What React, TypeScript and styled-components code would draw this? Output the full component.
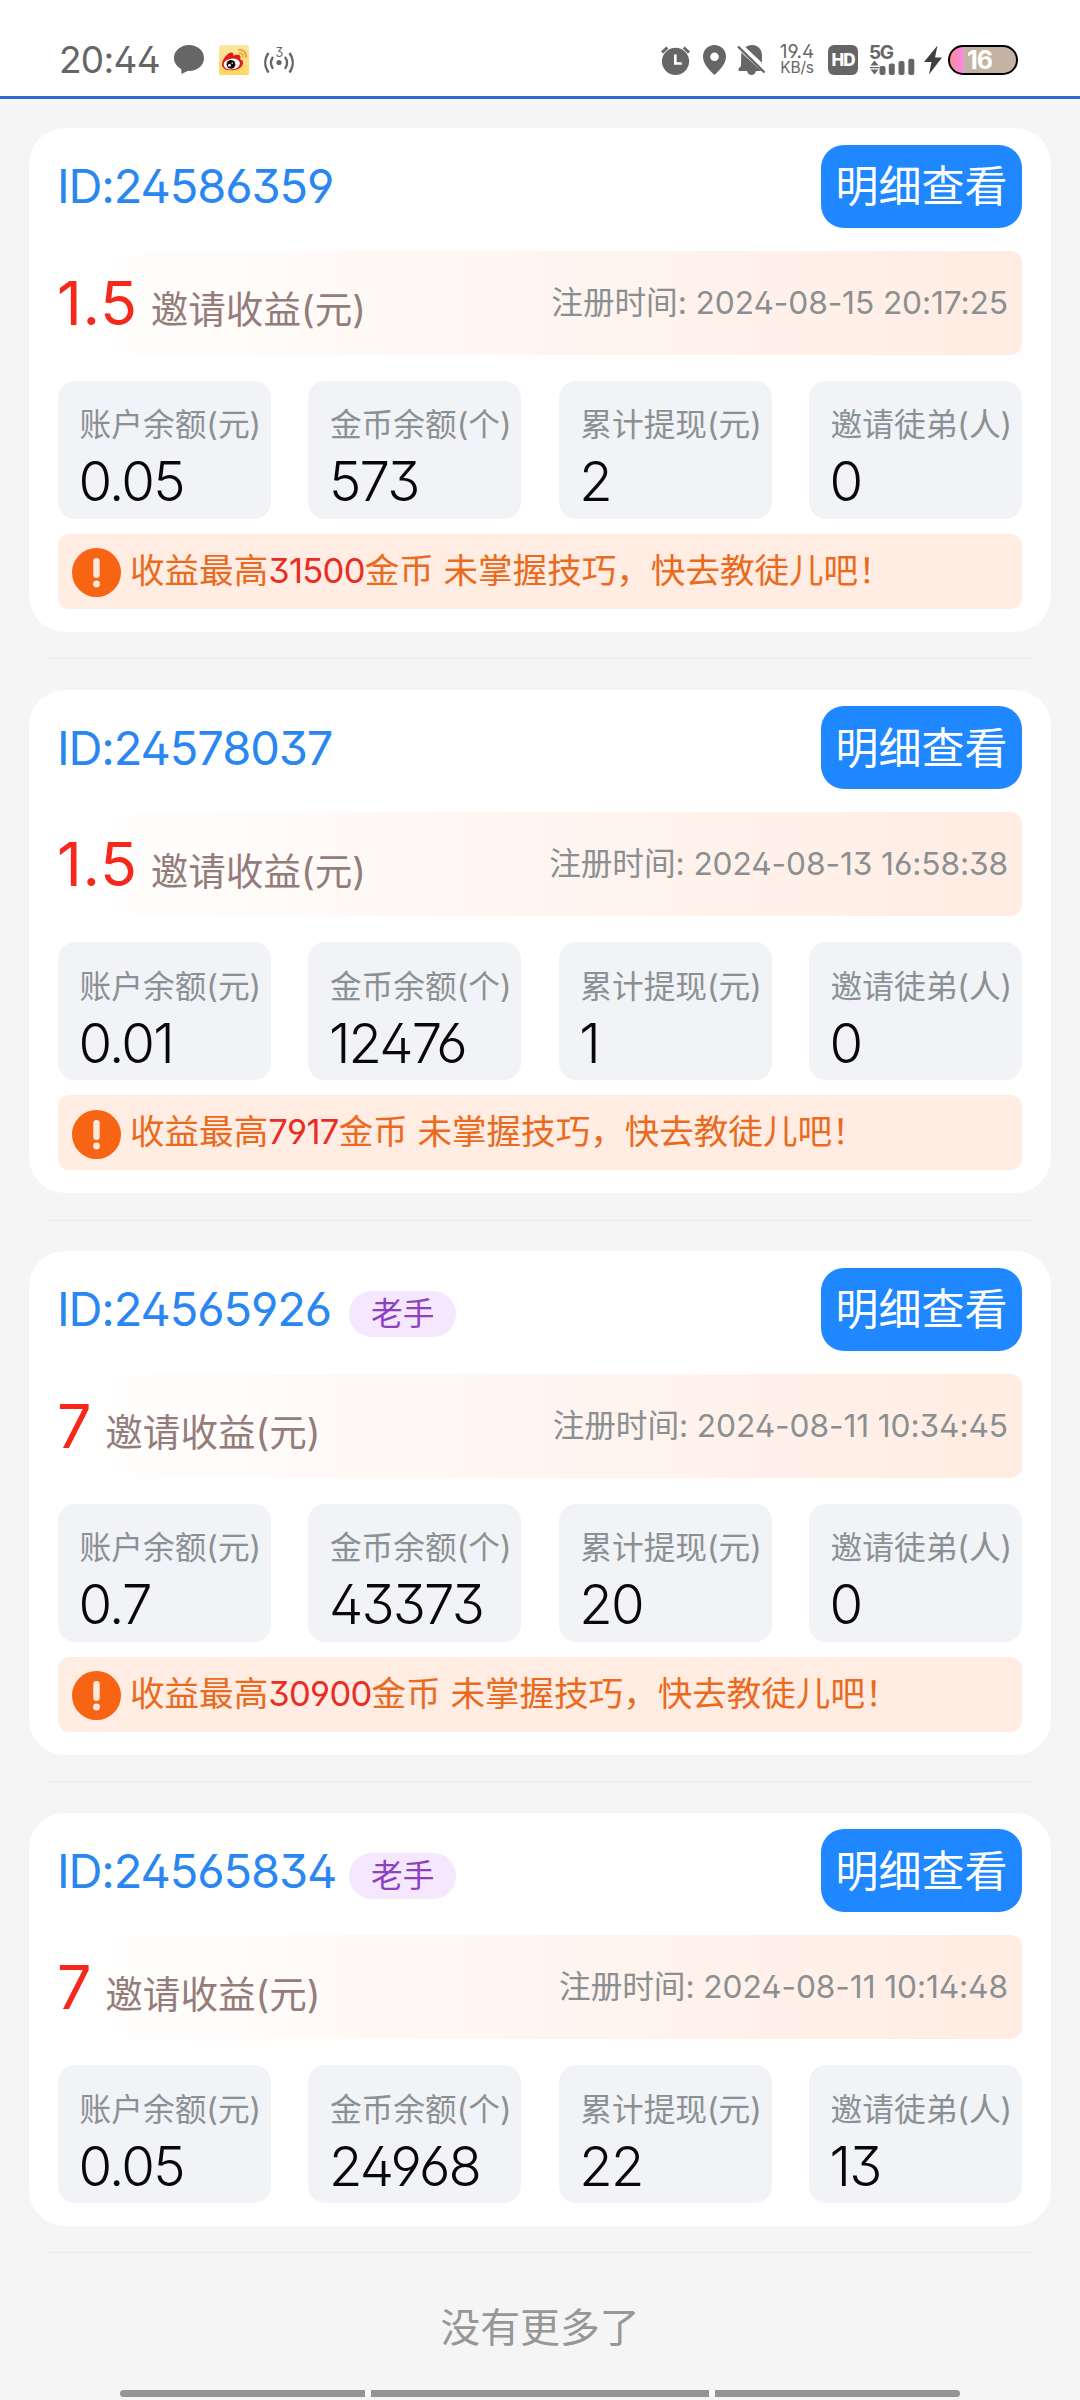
import React from 'react';
import styled, { createGlobalStyle } from 'styled-components';

const GlobalStyle = createGlobalStyle`
  body {
    margin: 0;
    background: #f5f5f5;
    font-family: Inter, 'Noto Sans CJK SC', sans-serif;
    font-feature-settings: 'ss01';
    font-weight: 400;
    -webkit-font-smoothing: antialiased;
  }
`;

const Page = styled.div`
  width: 1080px;
  height: 2400px;
  display: flex;
  flex-direction: column;
  box-sizing: border-box;
  background: #f5f5f5;
  overflow: hidden;
`;

/* ---------- status bar ---------- */

const StatusBar = styled.header`
  flex: none;
  height: 99px;
  box-sizing: border-box;
  padding: 24px 62px 0 59px;
  border-bottom: 3px solid #2a6bd6;
  background: #fff;
  color: #666;
  display: flex;
  align-items: center;
  justify-content: space-between;
`;

const StatusSide = styled.div`
  display: flex;
  align-items: center;
  height: 30px;
`;

const Clock = styled.span`
  width: 115px;
  font-size: 37px;
  line-height: 30px;
  letter-spacing: -0.7px;
  white-space: nowrap;
`;

const Glyph = styled.svg<{ $gap?: number }>`
  display: block;
  flex: none;
  margin-left: ${p => p.$gap ?? 0}px;
`;

const NetSpeed = styled.div`
  width: 36px;
  margin-left: 13px;
  display: flex;
  flex-direction: column;
  align-items: center;
  white-space: nowrap;
`;

const SpeedValue = styled.span`
  font-size: 19px;
  line-height: 16px;
`;

const SpeedUnit = styled.span`
  font-size: 15.5px;
  line-height: 16px;
  letter-spacing: -0.2px;
`;

const HdBadge = styled.span`
  width: 30px;
  height: 30px;
  margin-left: 13px;
  border-radius: 6px;
  background: #666;
  color: #fff;
  font: 800 17px/30px Inter, sans-serif;
  letter-spacing: -1px;
  text-align: center;
`;

const Signal = styled.div`
  width: 45px;
  height: 30px;
  margin-left: 12px;
  position: relative;
`;

const SignalLabel = styled.span`
  position: absolute;
  left: -1px;
  top: 0;
  font: 700 19px/16px Inter, sans-serif;
  letter-spacing: -1.3px;
`;

const Battery = styled.div`
  width: 70px;
  height: 30px;
  margin-left: 6px;
  box-sizing: border-box;
  border: 2px solid #000;
  border-radius: 15px;
  overflow: hidden;
  background: linear-gradient(90deg, #ff8a94 0, #f48be0 13px, #f09bf5 14px, #c4b2a2 14px);
  color: #fff;
  font: 700 25px/26px Inter, sans-serif;
  letter-spacing: -1px;
  padding-left: 17px;
`;

/* ---------- list ---------- */

const List = styled.main`
  display: flex;
  flex-direction: column;
  padding: 29.3px 29px 0;
`;

const Card = styled.section`
  box-sizing: border-box;
  padding: 16.7px 29px 22.8px;
  border-radius: 36px;
  background: #fff;
  display: flex;
  flex-direction: column;
`;

const Divider = styled.hr`
  width: 988px;
  height: 1px;
  margin: 26.3px auto 30.7px;
  border: 0;
  background: #ededed;
`;

const CardHead = styled.div`
  height: 83px;
  display: flex;
  align-items: center;
`;

const UserId = styled.span`
  width: 277px;
  margin-left: -1px;
  font-size: 47px;
  line-height: 56px;
  letter-spacing: -1.1px;
  white-space: nowrap;
  color: #2a87f2;
`;

const Badge = styled.span`
  height: 46px;
  margin: 10px 0 0 15px;
  padding: 0 22px;
  border-radius: 23px;
  background: #f5e7fe;
  color: #8e40bf;
  font-size: 31.7px;
  line-height: 46px;
`;

const DetailButton = styled.button`
  width: 201px;
  height: 83px;
  margin-left: auto;
  padding: 0;
  border: 0;
  border-radius: 23px;
  background: #1f87ff;
  color: #fff;
  font: inherit;
  font-size: 43px;
  line-height: 82px;
  white-space: nowrap;
`;

const IncomeBar = styled.div`
  height: 104px;
  margin-top: 23px;
  padding-right: 14px;
  border-radius: 11.5px;
  background: linear-gradient(90deg, #fff 0%, #ffece2 100%);
  display: flex;
  align-items: center;
`;

const Income = styled.span`
  font-size: 61px;
  line-height: 70px;
  letter-spacing: 0.7px;
  font-weight: 370;
  margin-left: -1px;
  color: #f6271b;
`;

const IncomeLabel = styled.span`
  margin: 15px 0 0 13px;
  font-size: 37.6px;
  line-height: 44px;
  color: #947c7a;
`;

const RegTime = styled.span`
  margin-left: auto;
  font-size: 31.7px;
  line-height: 40px;
  letter-spacing: -0.1px;
  color: #8a8f92;
  white-space: nowrap;
`;

const Stats = styled.div`
  margin-top: 26px;
  display: grid;
  grid-template-columns: repeat(4, 213px);
  justify-content: space-between;
`;

const Stat = styled.div`
  height: 137.7px;
  box-sizing: border-box;
  padding: 28.5px 0 0 21.6px;
  border-radius: 17px;
  background: #f1f3f7;
  display: flex;
  flex-direction: column;
  gap: 15px;
  white-space: nowrap;
`;

const StatLabel = styled.span`
  font-size: 31.7px;
  line-height: 32px;
  color: #8a9195;
`;

const StatValue = styled.span`
  margin-left: -1px;
  font-size: 54.5px;
  font-weight: 350;
  line-height: 51px;
  letter-spacing: -1.8px;
  color: #080808;
`;

const Notice = styled.div`
  height: 75px;
  margin-top: 15.3px;
  padding-left: 14px;
  border-radius: 11.5px;
  background: #ffece2;
  color: #ea6a20;
  display: flex;
  align-items: center;
`;

const NoticeIcon = styled.svg`
  display: block;
  flex: none;
  margin-top: 3px;
`;

const NoticeText = styled.p`
  margin: 0 0 1px 9px;
  font-size: 34.56px;
  line-height: 44px;
  white-space: nowrap;
`;

const Coins = styled.em`
  font-style: normal;
  letter-spacing: -0.7px;
  color: #e92d22;
`;

const EndText = styled.p`
  margin: 24px 0 0;
  text-align: center;
  font-size: 39.8px;
  line-height: 40px;
  color: #979797;
`;

const NavBar = styled.footer`
  height: 7px;
  margin: auto 120px 3px;
  display: grid;
  grid-template-columns: 245px 338px 245px;
  gap: 6px;
  border-radius: 4px;
  overflow: hidden;
  flex: none;
  background: #fafafa;
`;

const NavSegment = styled.span`
  background: #949494;
`;

interface Member {
  id: string;
  veteran?: boolean;
  income: string;
  time: string;
  stats: string[];
  best?: string;
}

const statLabels = ['账户余额(元)', '金币余额(个)', '累计提现(元)', '邀请徒弟(人)'];

const members: Member[] = [
  { id: '24586359', income: '1.5', time: '2024-08-15 20:17:25', stats: ['0.05', '573', '2', '0'], best: '31500' },
  { id: '24578037', income: '1.5', time: '2024-08-13 16:58:38', stats: ['0.01', '12476', '1', '0'], best: '7917' },
  { id: '24565926', veteran: true, income: '7', time: '2024-08-11 10:34:45', stats: ['0.7', '43373', '20', '0'], best: '30900' },
  { id: '24565834', veteran: true, income: '7', time: '2024-08-11 10:14:48', stats: ['0.05', '24968', '22', '13'] },
];

const ChatIcon = () => (
  <Glyph width="30" height="30" viewBox="0 0 30 30">
    <path fill="#666" d="M15 0C6.700 0 0 5.600 0 13c0 4.400 2.600 8.400 7.200 11l.3 5 6.500-3.200 1 .1c8.300 0 15-5.400 15-12.900S23.300 0 15 0z" />
  </Glyph>
);

const WeiboIcon = () => (
  <Glyph $gap={15} width="30" height="30" viewBox="0 0 30 30">
    <defs>
      <linearGradient id="wb" x1="0" y1="0" x2="0" y2="1">
        <stop offset="0" stopColor="#fbe7a6" />
        <stop offset="1" stopColor="#ffd75e" />
      </linearGradient>
    </defs>
    <rect width="30" height="30" rx="2" fill="url(#wb)" />
    <path fill="#e3191b" d="M3 19.500C3 15 8 8.500 12 7.600c2-.4 2.800 1 2.300 3.200 2.700-1.200 6.700-1.600 7.200.8.200.8 0 1.700-.4 2.600 2.300.7 3.200 2.200 2.900 4.300-.6 4-5.700 6.800-11.500 6.800S3 23 3 19.500z" />
    <ellipse cx="12.800" cy="19" rx="8.200" ry="5.400" fill="#fff" transform="rotate(-6 12.800 19)" />
    <circle cx="12" cy="19.300" r="4.400" fill="#0b0b0b" />
    <circle cx="10.500" cy="20.300" r="1.400" fill="#fff" />
    <circle cx="13.200" cy="18.300" r=".7" fill="#fff" />
    <path fill="none" stroke="#eba02c" strokeWidth="1.700" strokeLinecap="round" d="M19.800 5c4.500-.7 8 2.700 7.200 7.300M20.500 8.300c2.300-.3 3.700 1 3.400 3.300" />
  </Glyph>
);

const HotspotIcon = () => (
  <Glyph $gap={15} width="30" height="30" viewBox="0 0 30 30">
    <g fill="none" stroke="#666" strokeWidth="2.300">
      <path d="M4.500 8C.2 14 .2 21.500 4.500 27.500M25.500 8c4.300 6 4.300 13.500 0 19.500M9 11.800c-2.800 4-2.800 8 0 12M21 11.800c2.800 4 2.800 8 0 12" />
    </g>
    <circle cx="15" cy="17.500" r="2.600" fill="#666" />
    <text x="15.500" y="12" fontSize="12.500" textAnchor="middle" fill="#666">3</text>
  </Glyph>
);

const AlarmIcon = () => (
  <Glyph width="30" height="30" viewBox="0 0 30 30">
    <circle cx="14.500" cy="16.300" r="13.600" fill="#666" />
    <path d="M1 7.500 6.300 2.500M28 7.500l-5.300-5" stroke="#666" strokeWidth="3" />
    <path d="M14.300 9.500v9h6.500" fill="none" stroke="#fff" strokeWidth="2.700" />
  </Glyph>
);

const PinIcon = () => (
  <Glyph $gap={12} width="23" height="30" viewBox="0 0 23 30">
    <path fill="#666" fillRule="evenodd" d="M11.500 0C5 0 0 5 0 11.500 0 18 5 24 11.500 30 18 24 23 18 23 11.500 23 5 18 0 11.500 0zm0 7.500a4.300 4.300 0 1 1 0 8.600 4.300 4.300 0 0 1 0-8.600z" />
  </Glyph>
);

const MutedBellIcon = () => (
  <Glyph $gap={11} width="29" height="30" viewBox="0 0 29 30">
    <path fill="#666" d="M8.500 2.200C10.500.7 12.500 0 15 0c6 0 10 4.500 10 10.500v7.300zM4.300 7.500 24.500 26H19c-.8 2.500-2.300 4-4.500 4s-3.700-1.500-4.500-4H1.500v-2.200L4 21z" />
    <path d="M1 1.500 27.500 27.500" stroke="#666" strokeWidth="2.400" />
  </Glyph>
);

const SignalBars = () => (
  <Glyph width="45" height="30" viewBox="0 0 45 30">
    <path fill="#666" d="M4.500 15.500 8.500 20.500H.5zM4.500 29.500l4-5H.5zM0 22h9v1.200H0z" />
    <rect x="9.500" y="21" width="6" height="9" rx="2" fill="#666" />
    <rect x="18.800" y="18.500" width="6" height="11.500" rx="2" fill="#666" />
    <rect x="28.500" y="16" width="6" height="14" rx="2" fill="#666" />
    <rect x="38.300" y="13.700" width="6" height="16.300" rx="2" fill="#666" />
  </Glyph>
);

const BoltIcon = () => (
  <Glyph $gap={9} width="18" height="30" viewBox="0 0 18 30">
    <path fill="#3d403c" d="M13.500.5 0 17h7.500L5 29.500 18 12.500h-7z" />
  </Glyph>
);

const AlertIcon = () => (
  <NoticeIcon width="49" height="49" viewBox="0 0 49 49">
    <circle cx="24.500" cy="24.500" r="24.500" fill="#f66414" />
    <rect x="21.300" y="10" width="6.400" height="20" rx="3.200" fill="#ffe9dc" />
    <circle cx="24.500" cy="36" r="3.400" fill="#ffe9dc" />
  </NoticeIcon>
);

const MemberCard = ({ member }: { member: Member }) => (
  <Card>
    <CardHead>
      <UserId>ID:{member.id}</UserId>
      {member.veteran && <Badge>老手</Badge>}
      <DetailButton>明细查看</DetailButton>
    </CardHead>
    <IncomeBar>
      <Income>{member.income}</Income>
      <IncomeLabel>邀请收益(元)</IncomeLabel>
      <RegTime>注册时间: {member.time}</RegTime>
    </IncomeBar>
    <Stats>
      {statLabels.map((label, i) => (
        <Stat key={label}>
          <StatLabel>{label}</StatLabel>
          <StatValue>{member.stats[i]}</StatValue>
        </Stat>
      ))}
    </Stats>
    {member.best && (
      <Notice>
        <AlertIcon />
        <NoticeText>
          收益最高<Coins>{member.best}</Coins>金币 未掌握技巧，快去教徒儿吧！
        </NoticeText>
      </Notice>
    )}
  </Card>
);

export default function App() {
  return (
    <Page>
      <GlobalStyle />
      <StatusBar>
        <StatusSide>
          <Clock>20:44</Clock>
          <ChatIcon />
          <WeiboIcon />
          <HotspotIcon />
        </StatusSide>
        <StatusSide>
          <AlarmIcon />
          <PinIcon />
          <MutedBellIcon />
          <NetSpeed>
            <SpeedValue>19.4</SpeedValue>
            <SpeedUnit>KB/s</SpeedUnit>
          </NetSpeed>
          <HdBadge>HD</HdBadge>
          <Signal>
            <SignalBars />
            <SignalLabel>5G</SignalLabel>
          </Signal>
          <BoltIcon />
          <Battery>16</Battery>
        </StatusSide>
      </StatusBar>
      <List>
        {members.map(member => (
          <React.Fragment key={member.id}>
            <MemberCard member={member} />
            <Divider />
          </React.Fragment>
        ))}
        <EndText>没有更多了</EndText>
      </List>
      <NavBar>
        <NavSegment />
        <NavSegment />
        <NavSegment />
      </NavBar>
    </Page>
  );
}
